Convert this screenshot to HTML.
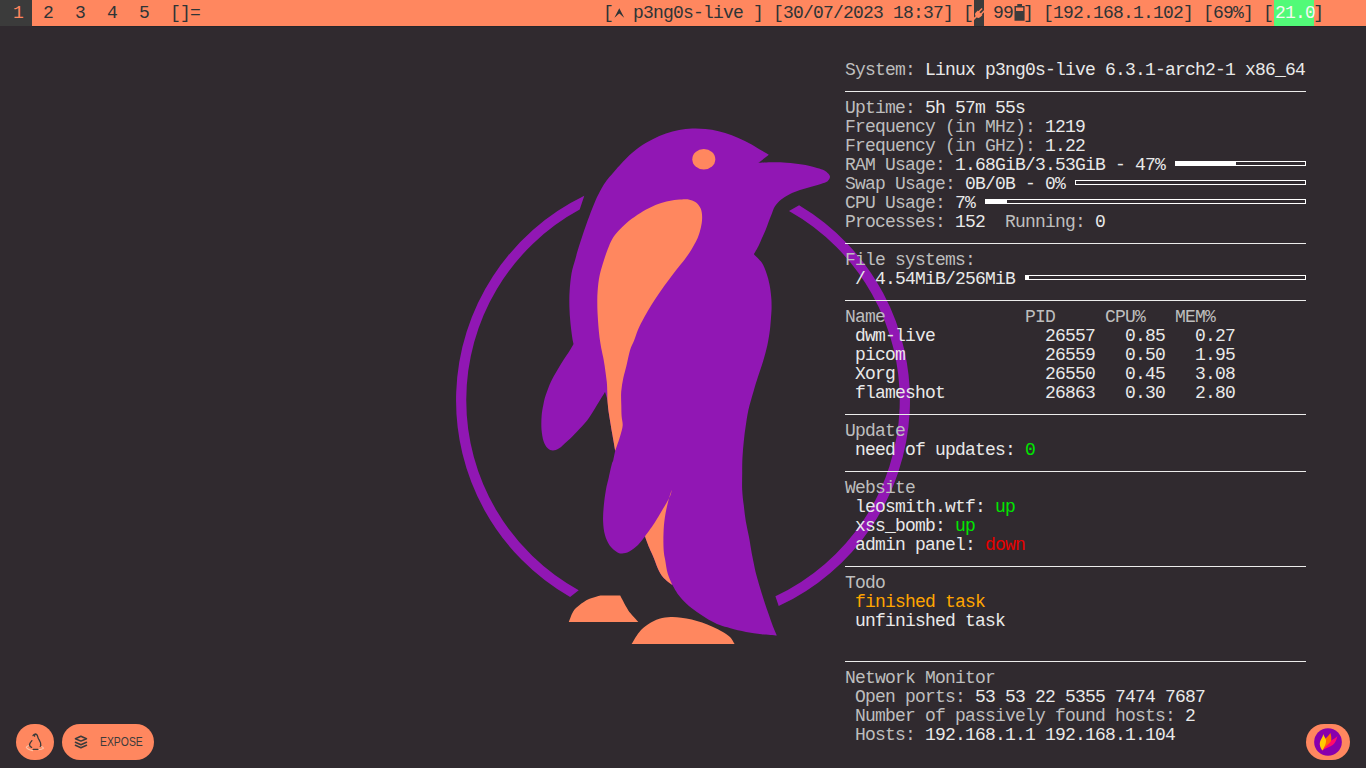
<!DOCTYPE html>
<html><head><meta charset="utf-8"><style>
html,body{margin:0;padding:0;width:1366px;height:768px;overflow:hidden;background:#302a2f;}
body{position:relative;font-family:"Liberation Mono",monospace;}
#bar{position:absolute;left:0;top:0;width:1366px;height:26px;background:#ff875f;}
.bt{position:absolute;top:0;height:26px;line-height:26px;font-size:18px;letter-spacing:-0.8px;color:#2e3436;white-space:pre;}
#tag1{position:absolute;left:0;top:0;width:32px;height:26px;background:#3b3b3b;}
svg#art{position:absolute;left:0;top:0;}
.ln{position:absolute;left:845px;height:19px;line-height:19px;font-size:18px;letter-spacing:-0.8px;color:#bebebe;white-space:pre;}
.w{color:#e9e9e9}
.g{color:#00e600}
.r{color:#e60000}
.o{color:#ffa500}
.hr{position:absolute;left:845px;width:461px;height:1px;background:#ececec;}
.pb{position:absolute;height:5px;box-sizing:border-box;border:1px solid #ffffff;}
.pb i{position:absolute;left:-1px;top:-1px;bottom:-1px;background:#ffffff;}
.btn{position:absolute;top:724px;height:36px;border-radius:18px;background:#ff875f;}
</style></head><body>
<svg id="art" width="1366" height="768" viewBox="0 0 1366 768">
<path fill="#9117b4" d="M 584.3 195.8 A 227.0 227.0 0 0 0 570.1 597.1 L 578.7 590.2 A 216.8 216.8 0 0 1 579.7 209.6 Z"/>
<path fill="#9117b4" d="M 799.1 205.2 A 227.0 227.0 0 0 1 778.7 606.1 L 775.4 596.3 A 216.8 216.8 0 0 0 789.0 211.1 Z"/>
<path fill="#9117b4" d="M 575.1 260.0 C 574.0 264.1 572.4 268.3 571.5 273.5 C 570.6 278.7 570.0 285.7 569.6 291.2 C 569.2 296.8 569.3 301.7 569.4 306.9 C 569.5 312.1 569.9 317.4 570.4 322.5 C 570.9 327.6 571.7 333.7 572.2 337.3 C 572.7 340.9 573.3 343.0 573.5 344.1 C 572.9 345.2 571.3 348.1 569.6 350.8 C 567.9 353.5 565.4 356.9 563.3 360.2 C 561.2 363.5 559.2 367.0 557.1 370.6 C 555.0 374.2 552.7 377.9 550.8 382.1 C 548.9 386.3 546.9 391.8 545.6 395.6 C 544.4 399.4 544.0 401.6 543.3 405.0 C 542.6 408.4 541.9 411.9 541.6 416.0 C 541.3 420.1 541.2 425.4 541.5 429.6 C 541.8 433.8 542.5 437.9 543.5 441.0 C 544.5 444.1 546.1 446.7 547.7 448.3 C 549.3 449.9 551.0 450.4 552.9 450.4 C 554.8 450.4 556.8 449.9 559.2 448.3 C 561.6 446.7 564.5 443.8 567.5 441.0 C 570.5 438.2 573.6 435.2 576.9 431.7 C 580.2 428.2 584.0 424.5 587.3 420.2 C 590.6 415.9 593.8 410.3 596.7 405.6 C 599.7 400.9 603.6 394.4 605.0 392.1 C 605.4 393.4 606.8 396.7 607.4 400.0 C 608.0 403.3 608.1 407.8 608.6 411.7 C 609.1 415.6 609.9 419.5 610.5 423.4 C 611.1 427.3 611.7 430.6 612.5 435.2 C 613.3 439.8 614.8 448.2 615.2 450.8 C 614.9 452.3 613.8 457.8 613.3 460.0 C 612.8 462.2 612.7 460.9 611.9 463.8 C 611.1 466.6 609.8 472.9 608.8 477.3 C 607.8 481.7 606.7 485.3 605.9 490.0 C 605.1 494.7 604.3 500.4 603.8 505.6 C 603.3 510.8 602.9 516.4 603.1 521.2 C 603.3 526.1 603.8 530.8 604.9 534.8 C 606.0 538.8 607.5 542.3 609.5 545.2 C 611.5 548.1 614.7 550.6 616.8 552.0 C 618.9 553.4 619.9 553.6 622.0 553.5 C 624.1 553.4 626.7 552.9 629.3 551.5 C 631.9 550.1 635.1 547.7 637.7 545.2 C 640.3 542.7 643.8 537.8 645.0 536.4 C 645.7 538.2 647.6 543.5 649.1 547.3 C 650.6 551.1 652.7 555.2 654.2 558.9 C 655.7 562.6 656.8 566.3 658.3 569.4 C 659.8 572.5 661.1 575.1 663.5 577.7 C 665.9 580.3 670.9 583.8 672.4 585.0 C 673.4 586.6 675.8 591.3 678.1 594.4 C 680.5 597.5 683.4 600.8 686.5 603.8 C 689.6 606.7 693.3 609.5 696.9 612.1 C 700.5 614.7 704.5 617.2 708.3 619.4 C 712.1 621.6 716.1 623.6 719.8 625.1 C 723.5 626.6 726.0 627.1 730.4 628.2 C 734.8 629.3 740.8 630.9 746.0 631.9 C 751.2 632.9 756.6 633.6 761.7 634.2 C 766.8 634.8 774.3 635.3 776.8 635.5 C 776.2 634.0 774.6 630.6 773.1 626.7 C 771.6 622.8 769.8 617.7 767.9 612.1 C 766.0 606.5 763.6 599.4 761.7 593.3 C 759.8 587.2 757.9 580.8 756.5 575.6 C 755.1 570.4 754.3 565.9 753.5 562.0 C 752.7 558.1 752.4 556.7 751.6 552.5 C 750.9 548.3 750.0 542.1 749.0 536.9 C 748.0 531.7 746.7 526.5 745.8 521.2 C 744.9 516.0 744.4 510.8 743.8 505.6 C 743.1 500.4 742.5 495.5 742.2 490.0 C 741.9 484.5 742.2 478.0 742.2 472.5 C 742.2 467.0 742.2 462.1 742.5 456.9 C 742.8 451.7 743.2 446.5 743.8 441.2 C 744.3 436.0 745.0 430.8 745.8 425.6 C 746.6 420.4 747.1 415.9 748.4 410.0 C 749.7 404.1 752.2 395.9 753.8 390.4 C 755.3 384.9 756.3 381.8 757.9 376.9 C 759.5 372.0 761.5 366.5 763.1 361.2 C 764.7 356.0 766.2 350.8 767.3 345.6 C 768.4 340.4 769.3 334.6 769.9 330.0 C 770.5 325.4 770.7 321.5 771.0 317.7 C 771.3 313.9 771.6 310.8 771.6 307.3 C 771.6 303.8 771.6 300.7 771.2 296.9 C 770.9 293.1 770.3 288.4 769.5 284.4 C 768.7 280.4 767.7 276.5 766.4 272.9 C 765.1 269.2 763.8 265.6 761.7 262.5 C 759.6 259.4 755.2 255.6 753.9 254.2 C 754.7 252.8 757.1 248.7 758.5 246.0 C 759.9 243.3 760.8 240.7 762.0 238.0 C 763.2 235.3 764.6 232.5 765.6 230.0 C 766.6 227.5 767.2 225.7 768.2 222.9 C 769.2 220.2 770.8 216.3 771.9 213.5 C 773.0 210.7 773.4 208.6 775.0 206.2 C 776.6 203.9 778.8 201.5 781.2 199.5 C 783.7 197.5 786.5 195.9 789.6 194.3 C 792.7 192.7 796.5 191.3 800.0 190.1 C 803.5 188.9 806.9 188.0 810.4 187.0 C 813.9 186.0 817.9 184.9 820.8 183.9 C 823.7 182.9 826.1 182.5 827.6 181.2 C 829.1 180.0 830.0 178.0 830.0 176.6 C 830.0 175.2 828.8 174.0 827.6 172.9 C 826.4 171.8 825.1 170.8 822.9 169.8 C 820.7 168.9 818.1 168.1 814.6 167.2 C 811.1 166.3 806.8 165.3 802.1 164.6 C 797.4 163.8 791.7 163.1 786.5 162.7 C 781.3 162.3 775.5 162.2 770.8 162.3 C 766.1 162.4 760.4 162.9 758.3 163.0 C 760.0 161.6 767.0 156.1 768.8 154.7 C 767.0 153.6 762.1 150.7 758.1 148.4 C 754.1 146.1 749.3 143.3 744.9 141.1 C 740.5 138.9 736.2 136.8 731.8 135.2 C 727.4 133.6 723.0 132.3 718.6 131.2 C 714.2 130.2 709.8 129.4 705.4 129.0 C 701.0 128.6 696.6 128.4 692.2 128.6 C 687.8 128.8 683.4 129.1 679.1 129.9 C 674.7 130.7 670.3 132.0 665.9 133.5 C 661.5 135.0 657.1 136.9 652.7 139.2 C 648.3 141.4 643.9 143.9 639.5 147.1 C 635.1 150.2 630.7 154.0 626.4 158.3 C 622.0 162.5 616.5 169.0 613.2 172.8 C 609.9 176.5 608.6 177.9 606.6 180.5 C 604.6 183.1 603.4 185.2 601.5 188.6 C 599.6 192.0 597.4 196.2 595.4 200.8 C 593.4 205.5 591.3 210.9 589.2 216.5 C 587.1 222.1 584.7 228.8 582.9 234.2 C 581.1 239.6 579.5 244.4 578.2 248.8 C 576.9 253.1 576.2 255.9 575.1 260.0 Z"/>
<path fill="#ff875f" d="M 682.0 199.4 C 685.1 199.3 687.9 199.3 690.4 199.9 C 692.9 200.5 695.0 201.5 696.7 203.0 C 698.4 204.5 699.9 206.6 700.8 208.8 C 701.7 210.9 702.0 213.6 702.1 216.0 C 702.2 218.4 702.1 220.7 701.7 223.3 C 701.3 225.9 700.6 228.9 699.8 231.7 C 699.0 234.5 698.1 237.1 696.7 240.0 C 695.3 242.9 693.4 246.3 691.5 249.4 C 689.6 252.5 687.8 255.3 685.2 258.8 C 682.7 262.2 679.0 266.4 676.2 270.0 C 673.4 273.6 671.0 276.8 668.3 280.4 C 665.6 284.0 662.8 287.9 660.0 291.9 C 657.2 295.9 654.3 300.2 651.7 304.4 C 649.1 308.6 646.7 312.7 644.4 316.9 C 642.1 321.1 639.8 325.4 638.1 329.4 C 636.4 333.4 635.3 337.4 634.0 340.8 C 632.7 344.2 631.4 345.9 630.1 350.0 C 628.9 354.1 627.6 360.9 626.5 365.6 C 625.4 370.3 624.2 373.8 623.3 378.1 C 622.4 382.5 621.6 387.2 621.2 391.7 C 620.9 396.2 621.2 400.9 621.3 405.0 C 621.4 409.1 621.4 412.7 621.6 416.0 C 621.8 419.3 622.8 422.2 622.7 425.0 C 622.6 427.8 621.8 430.2 621.1 432.8 C 620.4 435.4 619.7 437.6 618.8 440.6 C 617.8 443.6 615.8 449.1 615.2 450.8 C 614.8 448.2 613.3 439.8 612.5 435.2 C 611.7 430.6 611.1 427.3 610.5 423.4 C 609.9 419.5 609.1 415.6 608.6 411.7 C 608.1 407.8 607.6 403.2 607.4 400.0 C 607.2 396.8 607.4 395.5 607.3 392.5 C 607.2 389.5 607.2 386.6 606.8 382.1 C 606.3 377.6 605.2 370.0 604.6 365.6 C 604.0 361.2 603.5 358.9 602.9 356.0 C 602.3 353.1 601.8 351.0 601.2 348.0 C 600.7 345.0 600.1 341.7 599.6 338.0 C 599.1 334.3 598.7 330.0 598.4 326.0 C 598.1 322.0 597.8 317.7 597.6 314.0 C 597.4 310.3 597.3 307.5 597.3 303.8 C 597.3 300.0 597.2 295.9 597.6 291.2 C 598.0 286.6 598.5 280.8 599.6 275.6 C 600.7 270.4 602.6 264.5 604.0 260.0 C 605.4 255.5 606.6 252.2 607.9 248.8 C 609.2 245.3 610.3 242.4 612.0 239.4 C 613.7 236.4 615.5 234.0 618.3 231.0 C 621.0 228.0 624.8 224.2 628.5 221.2 C 632.2 218.2 636.7 215.2 640.4 212.9 C 644.1 210.6 647.3 208.8 650.8 207.2 C 654.3 205.5 657.8 204.1 661.2 203.0 C 664.7 201.9 668.2 201.0 671.7 200.4 C 675.2 199.8 678.9 199.5 682.0 199.4 Z"/>
<path fill="#ff875f" d="M 671.8 489.5 C 671.5 490.6 671.5 492.9 670.0 496.2 C 668.5 499.6 665.3 504.8 662.7 509.3 C 660.1 513.8 657.2 518.8 654.3 523.3 C 651.3 527.8 646.5 534.2 645.0 536.4 C 645.7 538.2 647.6 543.5 649.1 547.3 C 650.6 551.1 652.7 555.2 654.2 558.9 C 655.7 562.6 656.8 566.3 658.3 569.4 C 659.8 572.5 661.1 575.1 663.5 577.7 C 665.9 580.3 670.9 583.8 672.4 585.0 C 671.6 583.1 668.9 577.7 667.7 573.5 C 666.5 569.3 665.9 563.9 665.2 560.0 C 664.5 556.1 664.0 554.8 663.7 550.4 C 663.4 546.0 663.3 539.1 663.5 533.8 C 663.7 528.4 664.0 523.3 664.8 518.1 C 665.5 512.9 666.7 507.3 667.9 502.5 C 669.1 497.7 671.1 491.7 671.8 489.5 Z"/>
<ellipse fill="#ff875f" cx="703.8" cy="159.2" rx="11.5" ry="10.2"/>
<path fill="#ff875f" d="M 568.8 622.0 C 580.4 622.0 626.7 622.0 638.3 622.0 C 637.0 620.5 632.2 615.5 630.3 613.1 C 628.4 610.7 628.5 610.8 626.8 607.8 C 625.1 604.8 621.3 597.5 620.2 595.4 C 616.9 595.4 603.7 595.4 600.4 595.4 C 598.5 596.0 592.5 597.4 589.0 599.0 C 585.5 600.6 581.9 603.1 579.3 605.2 C 576.7 607.3 575.0 608.6 573.2 611.4 C 571.5 614.2 569.5 620.2 568.8 622.0 Z"/>
<path fill="#ff875f" d="M 631.6 644.0 C 648.8 644.0 717.4 644.0 734.6 644.0 C 733.8 642.9 732.0 639.1 730.0 637.1 C 728.0 635.1 725.8 633.6 722.9 631.9 C 720.0 630.2 716.0 628.3 712.5 626.7 C 709.0 625.1 705.6 623.7 702.1 622.5 C 698.6 621.3 695.2 620.2 691.7 619.4 C 688.2 618.6 684.7 618.2 681.2 617.8 C 677.8 617.4 674.5 616.9 670.8 617.1 C 667.1 617.3 663.1 617.6 659.3 618.8 C 655.5 620.0 651.2 622.2 647.8 624.5 C 644.4 626.8 641.7 629.1 639.0 632.4 C 636.3 635.6 632.8 642.1 631.6 644.0 Z"/>
</svg>
<div id="bar"></div>
<div id="tag1"></div>
<div style="position:absolute;left:32px;top:26px;width:1334px;height:1px;background:#25262b"></div>
<div class="bt" style="left:13px;color:#ff875f">1</div>
<div class="bt" style="left:43px">2</div>
<div class="bt" style="left:75px">3</div>
<div class="bt" style="left:107px">4</div>
<div class="bt" style="left:139px">5</div>
<div class="bt" style="left:170px">[]=</div>
<div class="bt" style="left:603px">[  p3ng0s-live ] [30/07/2023 18:37] [  99 ] [192.168.1.102] [69%] [    ]</div>
<div style="position:absolute;left:974px;top:0;width:10px;height:26px;background:#3b3b3b"></div>
<svg style="position:absolute;left:0;top:0" width="1366" height="26" viewBox="0 0 1366 26">
<path fill="#2e3436" d="M619.3 8.3 L624.2 17.8 Q621.8 16.2 620.6 14.6 L619.3 13.6 L618 14.6 Q616.8 16.2 614.4 17.8 Z"/>
<g fill="#ff875f" transform="translate(979.3 13.6) rotate(45)"><path d="M-3.3 -1.2 H3.3 V1.3 Q3.3 4.4 0 4.4 Q-3.3 4.4 -3.3 1.3 Z M-2.4 -5.6 H-0.9 V-1 H-2.4 Z M0.9 -5.6 H2.4 V-1 H0.9 Z M-0.8 4 H0.8 V8.2 H-0.8 Z"/></g>
<path fill="#3b3b3b" fill-rule="evenodd" d="M1017.3 4 H1022 V5.9 H1024.6 V20.8 H1014.5 V5.9 H1017.3 Z M1016 7.6 V11.1 H1023.2 V7.6 Z"/>
</svg>
<div style="position:absolute;left:1274px;top:0;width:40px;height:26px;background:#52fa78"></div>
<div class="bt" style="left:1275px;color:#f8f8f2">21.0</div>

<div class="ln" style="top:61px">System: <span class="w">Linux p3ng0s-live 6.3.1-arch2-1 x86_64</span></div>
<div class="hr" style="top:91px"></div>
<div class="ln" style="top:99px">Uptime: <span class="w">5h 57m 55s</span></div>
<div class="ln" style="top:118px">Frequency (in MHz): <span class="w">1219</span></div>
<div class="ln" style="top:137px">Frequency (in GHz): <span class="w">1.22</span></div>
<div class="ln" style="top:156px">RAM Usage: <span class="w">1.68GiB/3.53GiB - 47%</span></div>
<div class="pb" style="left:1175px;top:161px;width:131px"><i style="width:61px"></i></div>
<div class="ln" style="top:175px">Swap Usage: <span class="w">0B/0B - 0%</span></div>
<div class="pb" style="left:1075px;top:180px;width:231px"></div>
<div class="ln" style="top:194px">CPU Usage: <span class="w">7%</span></div>
<div class="pb" style="left:985px;top:199px;width:321px"><i style="width:22px"></i></div>
<div class="ln" style="top:213px">Processes: <span class="w">152</span>  Running: <span class="w">0</span></div>
<div class="hr" style="top:243px"></div>
<div class="ln" style="top:251px">File systems:</div>
<div class="ln" style="top:270px"> <span class="w">/ 4.54MiB/256MiB</span></div>
<div class="pb" style="left:1025px;top:275px;width:281px"><i style="width:4px"></i></div>
<div class="hr" style="top:300px"></div>
<div class="ln" style="top:308px">Name              PID     CPU%   MEM%</div>
<div class="ln w" style="top:327px"> dwm-live           26557   0.85   0.27</div>
<div class="ln w" style="top:346px"> picom              26559   0.50   1.95</div>
<div class="ln w" style="top:365px"> Xorg               26550   0.45   3.08</div>
<div class="ln w" style="top:384px"> flameshot          26863   0.30   2.80</div>
<div class="hr" style="top:414px"></div>
<div class="ln" style="top:422px">Update</div>
<div class="ln w" style="top:441px"> need of updates: <span class="g">0</span></div>
<div class="hr" style="top:471px"></div>
<div class="ln" style="top:479px">Website</div>
<div class="ln w" style="top:498px"> leosmith.wtf: <span class="g">up</span></div>
<div class="ln w" style="top:517px"> xss_bomb: <span class="g">up</span></div>
<div class="ln w" style="top:536px"> admin panel: <span class="r">down</span></div>
<div class="hr" style="top:566px"></div>
<div class="ln" style="top:574px">Todo</div>
<div class="ln o" style="top:593px"> finished task</div>
<div class="ln w" style="top:612px"> unfinished task</div>
<div class="hr" style="top:661px"></div>
<div class="ln" style="top:669px">Network Monitor</div>
<div class="ln" style="top:688px"> Open ports: <span class="w">53 53 22 5355 7474 7687</span></div>
<div class="ln" style="top:707px"> Number of passively found hosts: <span class="w">2</span></div>
<div class="ln" style="top:726px"> Hosts: <span class="w">192.168.1.1 192.168.1.104</span></div>

<div class="btn" style="left:16px;width:38px"></div>
<div class="btn" style="left:62px;width:92px"></div>
<svg style="position:absolute;left:0;top:720px" width="160" height="48" viewBox="0 720 160 48">
<g fill="none" stroke-linecap="round" stroke-linejoin="round">
<path stroke="#ffc3a6" stroke-width="1.1" d="M29.6 745.2 Q27 746 26.3 747.2 Q27.5 749.5 32.6 750.6 M38.3 749.8 Q42 749.6 43.6 748.2 Q42.6 746.5 40.6 746.2"/>
<path stroke="#3b3b3b" stroke-width="1.3" d="M33 735.6 Q34.8 732.6 37.3 735.3 M34.6 734.6 L34.6 736.2 M37.4 735.6 Q37.8 738 39.4 740.5 Q41.4 743.5 40.8 745.8 L40.2 746.4 M31.9 740.6 Q29.6 743 29.5 745 Q30 746.8 31.6 747.4 M33.2 749.4 L37.9 749.4 M39.2 739.8 Q41 743 40.6 745"/>
<path stroke="#3b3b3b" stroke-width="1.5" d="M75.4 738.7 L80.9 736.3 L86.5 738.7 L80.9 741.1 Z M75.4 742.3 L80.9 744.8 L86.5 742.3 M75.4 745.3 L80.9 747.7 L86.5 745.3"/>
</g>
</svg>
<div style="position:absolute;left:100px;top:735px;font-family:'Liberation Sans',sans-serif;font-size:13px;line-height:14px;color:#3b3b3b;transform-origin:0 0;transform:scaleX(0.8)">EXPOSE</div>
<div class="btn" style="left:1306px;width:44px"></div>
<svg style="position:absolute;left:1312px;top:726px" width="32" height="32" viewBox="0 0 32 32">
<circle cx="16" cy="16" r="13.85" fill="#8800ad"/>
<path fill="#ff0a6c" d="M25.4 10 C24.8 13.5 23.5 16.5 21 18.8 C18 21 14 22.2 10.4 24.4 L11.5 20.5 C13.8 17.5 16.8 15.3 19.5 14.2 C22 13 24 11.6 25.4 10 Z"/>
<path fill="#ff6a00" d="M18.3 6.9 C19 8.5 19.5 11 19.3 13.5 C19.1 15.5 18 16.8 16 18.4 C14 20 11.8 21.8 10.4 24.4 C11.2 20 12.3 15.5 13.7 12.6 C15 10.5 17.3 9.3 18.3 6.9 Z"/>
<path fill="#ffcc00" d="M11.25 7.9 C11.6 9.5 13 11.3 13.8 13 C14.3 14.5 14 17 13.3 18.5 C12.6 20.6 11.4 22.6 10.4 24.4 C9.2 23 8 21 7.8 18.6 C7.6 16.3 8.5 14.5 9.7 12.3 C10.5 10.8 11.1 9.5 11.25 7.9 Z"/>
</svg>
</body></html>
